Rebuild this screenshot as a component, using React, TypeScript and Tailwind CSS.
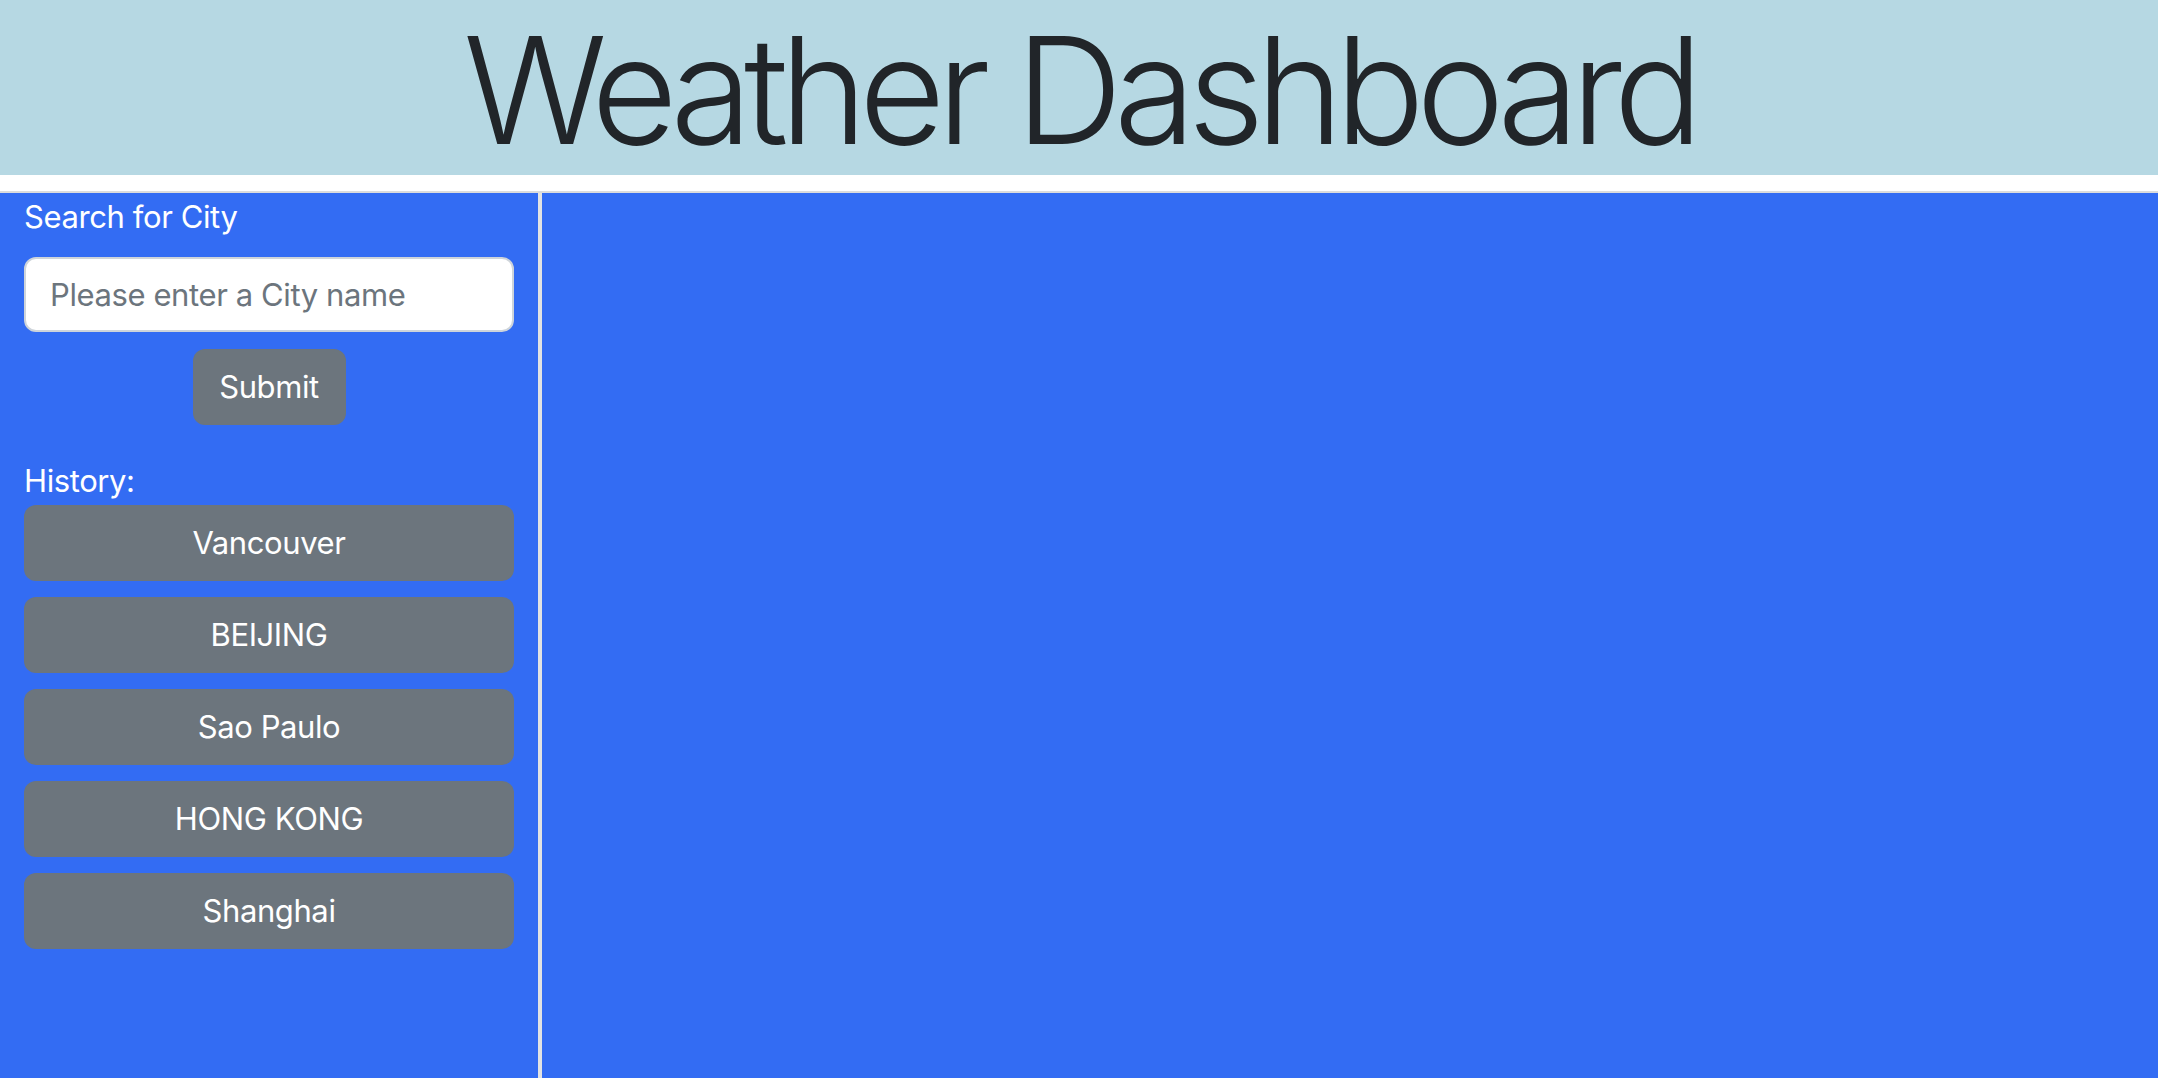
export default function App() {
  const history = ["Vancouver", "BEIJING", "Sao Paulo", "HONG KONG", "Shanghai"];

  return (
    <div className="min-h-screen bg-white font-['Inter','Liberation_Sans',sans-serif] text-[#212529]">
      <header className="h-[175px] bg-[#b6d8e3] flex justify-center">
        <h1 className="text-[149px] leading-[180px] font-light tracking-[-8.5px]">
          Weather Dashboard
        </h1>
      </header>

      <div className="mt-[16px] flex h-[887px] border-t-2 border-[#dcdcdc] bg-[#336cf3]">
        <aside className="w-[538px] shrink-0 px-[24px] text-white tracking-[-0.4px]">
          <p className="text-[31px] leading-[48px]">Search for City</p>
          <input
            placeholder="Please enter a City name"
            className="mt-[16px] w-full h-[75px] rounded-[12px] border-2 border-[#ced4da] bg-white px-[24px] text-[31px] tracking-[-0.4px] text-[#212529] placeholder:text-[#6c757d] outline-none"
          />
          <div className="mt-[17px] flex justify-center">
            <button className="h-[76px] w-[153px] rounded-[12px] bg-[#6c757d] text-[31px] text-white">
              Submit
            </button>
          </div>

          <p className="mt-[32px] text-[31px] leading-[48px]">History:</p>
          <div className="flex flex-col gap-[16px]">
            {history.map((c) => (
              <button
                key={c}
                className="h-[76px] w-full rounded-[12px] bg-[#6c757d] text-[31px] text-white"
              >
                {c}
              </button>
            ))}
          </div>
        </aside>
        <div className="w-[4px] bg-[#e3e3e3]" />
        <main className="flex-1" />
      </div>
    </div>
  );
}
